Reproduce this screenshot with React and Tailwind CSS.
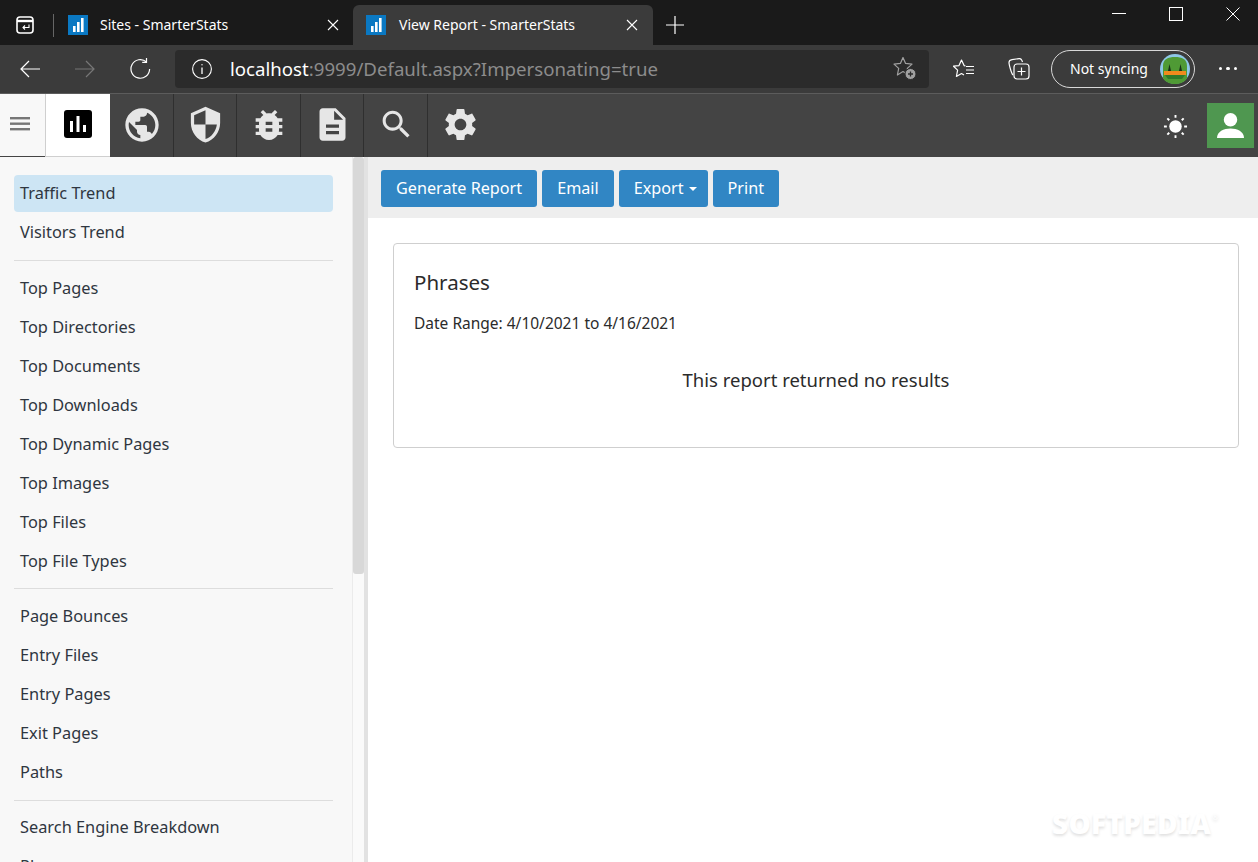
import React from "react";

function BarLogo({ className }) {
  return (
    <svg viewBox="0 0 20 20" className={className}>
      <rect width="20" height="20" fill="#0a78c2" />
      <rect x="5" y="11" width="2.6" height="6" fill="#fff" />
      <rect x="9" y="7" width="2.6" height="10" fill="#fff" />
      <rect x="13" y="3" width="2.6" height="14" fill="#fff" />
    </svg>
  );
}

function Tab({ active, title }) {
  return (
    <div className={active
      ? "flex items-center w-[300px] h-[40px] bg-[#3b3b3b] rounded-t-[6px] pl-[13px] pr-[15px]"
      : "flex items-center w-[299px] h-[40px] pl-[14px] pr-[14px]"}>
      <BarLogo className="w-[20px] h-[20px] shrink-0" />
      <span className={(active ? "ml-[13px] " : "ml-[12px] ") + "mb-[2px] flex-1 text-[14px] text-white"}>{title}</span>
      <svg viewBox="0 0 12 12" className="w-[12px] h-[12px]" stroke="#fff" strokeWidth="1.1">
        <path d="M1 1l10 10M11 1L1 11" />
      </svg>
    </div>
  );
}

function NavCell({ children }) {
  return <div className="w-[63.6px] h-full border-r border-[#2f2f2f] pl-[1px] pb-[2px] flex items-center justify-center">{children}</div>;
}

const G = "#e6e6e6";

const groups = [
  ["Traffic Trend", "Visitors Trend"],
  ["Top Pages", "Top Directories", "Top Documents", "Top Downloads", "Top Dynamic Pages", "Top Images", "Top Files", "Top File Types"],
  ["Page Bounces", "Entry Files", "Entry Pages", "Exit Pages", "Paths"],
  ["Search Engine Breakdown", "Phrases"],
];

export default function App() {
  return (
    <div className="relative w-[1258px] h-[862px] overflow-hidden flex flex-col bg-white font-['Noto_Sans','Open_Sans',sans-serif]">
      {/* Title bar */}
      <div className="h-[45px] bg-[#1a1a1a] flex items-end shrink-0 relative">
        <div className="w-[54px] h-[40px] flex items-center justify-center relative pr-[4px] pb-[1px]">
          <svg viewBox="0 0 18 18" className="w-[18px] h-[18px]" fill="none" stroke="#fff" strokeWidth="1.6">
            <rect x="1" y="1" width="16" height="16" rx="3" />
            <path d="M1 5h16" strokeWidth="2.4" />
            <path d="M13 8.500v3H7M9 9.500l-2 2 2 2" strokeWidth="1.1" />
          </svg>
          <div className="absolute right-0 top-[9px] h-[23px] w-px bg-[#666]" />
        </div>
        <Tab title="Sites - SmarterStats" />
        <Tab active title="View Report - SmarterStats" />
        <div className="w-[44px] h-[40px] flex items-center justify-center pb-[1px]">
          <svg viewBox="0 0 18 18" className="w-[18px] h-[18px]" stroke="#fff" strokeWidth="1.2"><path d="M9 0v18M0 9h18" /></svg>
        </div>
        <div className="absolute right-[18px] top-0 flex items-center h-[27px] gap-[43px]">
          <div className="w-[14px] h-px bg-white" />
          <div className="w-[14px] h-[14px] border border-white" />
          <svg viewBox="0 0 14 14" className="w-[14px] h-[14px]" stroke="#fff" strokeWidth="1"><path d="M0.500 0.500l13 13M13.500 0.500l-13 13" /></svg>
        </div>
      </div>

      {/* Browser toolbar */}
      <div className="h-[49px] bg-[#3b3b3b] border-b border-[#5c5c5c] flex items-center shrink-0 pb-[1px]">
        <div className="w-[175px] flex items-center pl-[20px] gap-[35px]">
          <svg viewBox="0 0 20 18" className="w-[20px] h-[18px]" fill="none" stroke="#fff" strokeWidth="1.2"><path d="M20 9H1M9 1L1 9l8 8" /></svg>
          <svg viewBox="0 0 20 18" className="w-[20px] h-[18px]" fill="none" stroke="#777" strokeWidth="1.2"><path d="M0 9h19M11 1l8 8-8 8" /></svg>
          <svg viewBox="0 0 21 21" className="w-[21px] h-[21px]" fill="none" stroke="#fff" strokeWidth="1.2">
            <path d="M16.500 4A9.300 9.300 0 1 0 19.600 11" />
            <path d="M16.500 0v4.300h-4.300" />
          </svg>
        </div>
        <div className="w-[754px] h-[38px] bg-[#2b2b2b] rounded-[4px] flex items-center pl-[17px] pr-[12px]">
          <svg viewBox="0 0 20 20" className="w-[20px] h-[20px] shrink-0" fill="none" stroke="#fff" strokeWidth="1.1">
            <circle cx="10" cy="10" r="9.400" />
            <path d="M10 8.500V15" strokeWidth="1.3" />
            <circle cx="10" cy="5.800" r="0.700" fill="#fff" stroke="none" />
          </svg>
          <span className="ml-[18px] flex-1 text-[18.65px] whitespace-nowrap text-[#8c8c8c]"><span className="text-white">localhost</span>:9999/Default.aspx?Impersonating=true</span>
          <svg viewBox="0 0 24 24" className="w-[24px] h-[24px] mt-[1px]" fill="none" stroke="#a0a0a0" strokeWidth="1.2">
            <path d="M10 .5l2.600 5.900 6.400.7-4.700 4.300 1.300 6.600L10 14.600 4.400 18l1.300-6.600L1 7.100l6.400-.7z" strokeLinejoin="round" />
            <circle cx="17.500" cy="17" r="5.500" fill="#a0a0a0" stroke="#2b2b2b" strokeWidth="1" />
            <path d="M17.500 14.500v5M15 17h5" stroke="#2b2b2b" strokeWidth="1.300" />
          </svg>
        </div>
        <div className="w-[46px] flex justify-end">
          <svg viewBox="0 0 22 20" className="w-[22px] h-[20px]" fill="none" stroke="#fff" strokeWidth="1.200">
            <path d="M12.500 7 11.100 6.600 8.500 1 6 6.600l-5.500.6 4.100 3.900-1.200 6.400 5.100-3 2.500 1.500" strokeLinejoin="round" />
            <path d="M13 7.500h8M13 11h8M13 14.500h8" />
          </svg>
        </div>
        <div className="w-[55px] flex justify-end">
          <svg viewBox="0 0 22 22" className="w-[22px] h-[22px]" fill="none" stroke="#fff" strokeWidth="1.2">
            <path d="M5 17C3.200 15.500 1 6 1 4.500S2.500 1.800 4 1.600l7-1c1.500-.2 2.500.6 3 2l.5 1.400" />
            <rect x="6" y="6" width="15" height="15" rx="3" />
            <path d="M13.500 9.500v8M9.500 13.500h8" />
          </svg>
        </div>
        <div className="ml-[21px] w-[144px] h-[38px] rounded-full border-[1.5px] border-[#d8d8d8] flex items-center pl-[18px] pr-[4px] justify-between">
          <span className="text-[14px] text-white whitespace-nowrap">Not syncing</span>
          <svg viewBox="0 0 30 30" className="w-[30px] h-[30px]">
            <circle cx="15" cy="15" r="15" fill="#8ec7e6" />
            <path d="M3 24V12C3 5 8 3 15 3s12 2 12 9v12c-2 4-7 6-12 6S5 28 3 24z" fill="#4f9a35" />
            <path d="M4 17h22v4H4z" fill="#f08a1d" />
            <path d="M5 21h20l-3 4H8z" fill="#2e7a2a" />
            <path d="M8 17l1.500-7 1.500 7zM19 17l1.500-7 1.500 7z" fill="#183018" />
          </svg>
        </div>
        <div className="flex-1 flex justify-center gap-[4px] pl-[3px]">
          <div className="w-[3.500px] h-[3.500px] rounded-full bg-white" />
          <div className="w-[3.500px] h-[3.500px] rounded-full bg-white" />
          <div className="w-[3.500px] h-[3.500px] rounded-full bg-white" />
        </div>
      </div>

      {/* App nav */}
      <div className="h-[63px] bg-[#444444] flex shrink-0">
        <div className="w-[45px] h-full bg-[#f8f8f8] border-b border-[#444] pr-[5px] pb-[2px] flex items-center justify-center">
          <svg viewBox="0 0 20 14" className="w-[20px] h-[14px]" fill="#777"><rect y="0" width="20" height="2.400" /><rect y="5.500" width="20" height="2.400" /><rect y="11" width="20" height="2.400" /></svg>
        </div>
        <div className="w-[65px] h-full bg-white border-l border-b border-[#cfcfcf] pb-[3px] flex items-center justify-center">
          <svg viewBox="0 0 28 28" className="w-[28px] h-[28px]">
            <rect width="28" height="28" rx="3" fill="#000" />
            <rect x="6" y="11" width="3" height="11" fill="#fff" />
            <rect x="12.500" y="6" width="3" height="16" fill="#fff" />
            <rect x="19" y="15" width="3" height="7" fill="#fff" />
          </svg>
        </div>
        <NavCell>
          <svg viewBox="0 0 24 24" className="w-[40px] h-[40px]" fill={G}>
            <path d="M12 2C6.480 2 2 6.480 2 12s4.480 10 10 10 10-4.480 10-10S17.520 2 12 2zm-1 17.930c-3.950-.490-7-3.850-7-7.930 0-.620.080-1.210.210-1.790L9 15v1c0 1.100.900 2 2 2v1.930zm6.900-2.540c-.260-.810-1-1.390-1.900-1.390h-1v-3c0-.550-.450-1-1-1H8v-2h2c.550 0 1-.450 1-1V7h2c1.100 0 2-.900 2-2v-.410c2.930 1.190 5 4.060 5 7.410 0 2.080-.800 3.970-2.100 5.390z" />
          </svg>
        </NavCell>
        <NavCell>
          <svg viewBox="0 0 24 24" className="w-[39px] h-[39px]" fill={G}>
            <path d="M12 1L3 5v6c0 5.550 3.840 10.740 9 12 5.160-1.260 9-6.450 9-12V5l-9-4zm0 10.990h7c-.530 4.120-3.280 7.790-7 8.940V12H5V6.300l7-3.110v8.800z" />
          </svg>
        </NavCell>
        <NavCell>
          <svg viewBox="0 0 24 24" className="w-[40px] h-[40px]" fill={G}>
            <path d="M14 12H10V10H14M14 16H10V14H14M20 8H17.190C16.740 7.220 16.120 6.550 15.370 6.040L17 4.410L15.590 3L13.420 5.170C12.960 5.060 12.500 5 12 5C11.500 5 11.040 5.060 10.590 5.170L8.410 3L7 4.410L8.620 6.040C7.880 6.550 7.260 7.220 6.810 8H4V10H6.090C6.040 10.330 6 10.660 6 11V12H4V14H6V15C6 15.340 6.040 15.670 6.090 16H4V18H6.810C7.850 19.790 9.780 21 12 21C14.220 21 16.150 19.790 17.190 18H20V16H17.910C17.960 15.670 18 15.340 18 15V14H20V12H18V11C18 10.660 17.960 10.330 17.910 10H20V8Z" />
          </svg>
        </NavCell>
        <NavCell>
          <svg viewBox="0 0 24 24" className="w-[39px] h-[39px]" fill={G}>
            <path d="M14 2H6c-1.100 0-1.990.900-1.990 2L4 20c0 1.100.890 2 1.990 2H18c1.100 0 2-.900 2-2V8l-6-6zm2 16H8v-2h8v2zm0-4H8v-2h8v2zm-3-5V3.500L18.500 9H13z" />
          </svg>
        </NavCell>
        <NavCell>
          <svg viewBox="0 0 24 24" className="w-[37px] h-[37px]" fill={G}>
            <path d="M15.500 14h-.790l-.280-.270C15.410 12.590 16 11.110 16 9.500 16 5.910 13.090 3 9.500 3S3 5.910 3 9.500 5.910 16 9.500 16c1.610 0 3.090-.590 4.230-1.570l.270.280v.790l5 4.990L20.490 19l-4.990-5zm-6 0C7.010 14 5 11.990 5 9.500S7.010 5 9.500 5 14 7.010 14 9.500 11.990 14 9.500 14z" />
          </svg>
        </NavCell>
        <div className="w-[63.6px] h-full pl-[1px] pb-[2px] flex items-center justify-center">
          <svg viewBox="0 0 24 24" className="w-[39px] h-[39px]" fill={G}>
            <path d="M19.140 12.940c.040-.300.060-.610.060-.940 0-.320-.020-.640-.070-.940l2.030-1.580c.180-.140.230-.410.120-.610l-1.920-3.320c-.120-.220-.370-.290-.590-.220l-2.390.960c-.500-.380-1.030-.700-1.620-.940l-.360-2.540c-.040-.240-.240-.410-.480-.410h-3.840c-.240 0-.430.170-.470.410l-.360 2.540c-.590.240-1.130.570-1.620.940l-2.390-.960c-.220-.080-.470 0-.590.220L2.740 8.870c-.120.210-.080.470.120.610l2.030 1.580c-.050.300-.090.630-.090.940s.020.640.07.940l-2.030 1.580c-.180.140-.230.410-.120.610l1.920 3.320c.120.220.370.290.590.220l2.390-.960c.500.380 1.030.700 1.620.940l.360 2.540c.050.240.240.410.480.410h3.840c.240 0 .440-.170.470-.410l.360-2.540c.590-.240 1.130-.560 1.620-.940l2.390.960c.220.080.470 0 .590-.220l1.920-3.320c.120-.220.070-.470-.120-.610l-2.010-1.580zM12 15.600c-1.980 0-3.600-1.620-3.600-3.600s1.620-3.600 3.600-3.600 3.600 1.620 3.600 3.600-1.620 3.600-3.600 3.600z" />
          </svg>
        </div>
        <div className="flex-1 flex items-center justify-end">
          <div className="mr-[19px] mt-[2px]">
            <svg viewBox="0 0 26 26" className="w-[25px] h-[25px]" fill="#fff" stroke="#fff" strokeWidth="2">
              <circle cx="13" cy="13" r="6.500" stroke="none" />
              <path d="M13 1v3M13 22v3M1 13h3M22 13h3M4.500 4.500l2 2M19.500 19.500l2 2M21.500 4.500l-2 2M6.500 19.500l-2 2" />
            </svg>
          </div>
          <div className="w-[47px] h-[45px] bg-[#4f9750] mr-[4px] flex items-center justify-center">
            <svg viewBox="0 0 28 28" className="w-[27px] h-[27px]" fill="#fff">
              <circle cx="14" cy="8" r="7" />
              <path d="M0 27c0-7 7-10 14-10s14 3 14 10z" />
            </svg>
          </div>
        </div>
      </div>

      {/* Body */}
      <div className="flex-1 flex min-h-0">
        <div className="w-[368px] shrink-0 bg-[#f8f8f8] flex overflow-hidden">
          <nav className="w-[352px] shrink-0 pl-[14px] pr-[19px] pt-[18px] text-[16.35px] text-[#2f3640]">
            {groups.map((items, i) => (
              <div key={i} className={i < 3 ? "border-b border-[#dddddd] pb-[7px] mb-[8.33px]" : ""}>
                {items.map((t, j) => (
                  <div key={t} className={(i === 0 && j === 0 ? "bg-[#cde5f4] " : "") + "h-[37px] mb-[2px] px-[6px] rounded-[4px] flex items-center whitespace-nowrap"}>{t}</div>
                ))}
              </div>
            ))}
          </nav>
          <div className="w-[12px] shrink-0 bg-[#fafafa] border-l border-[#ebebeb]">
            <div className="h-[417px] bg-[#d8d8d8] rounded-[3px]" />
          </div>
          <div className="w-[4px] shrink-0 bg-[#e2e2e2]" />
        </div>
        <main className="flex-1 min-w-0 flex flex-col">
          <div className="h-[61px] bg-[#eeeeee] flex items-start pt-[13px] pl-[13px] gap-[5px] shrink-0">
            {["Generate Report", "Email", "Export", "Print"].map((t) => (
              <div key={t} className={(t === "Export" ? "pl-[15px] pr-[11px] " : "px-[15px] ") + "h-[37px] bg-[#3186c4] rounded-[3px] text-white text-[16.2px] flex items-center whitespace-nowrap"}>
                {t}
                {t === "Export" && <span className="ml-[5px] mt-[1px] border-x-[4px] border-x-transparent border-t-[4px] border-t-white" />}
              </div>
            ))}
          </div>
          <div className="ml-[25px] mt-[25px] w-[846px] h-[205px] border border-[#cfcfcf] rounded-[4px] px-[20px] pt-[22px] text-[#2b2b2b]">
            <div className="text-[20.500px] leading-[32px]">Phrases</div>
            <div className="mt-[15px] text-[15.500px] leading-[20px]">Date Range: 4/10/2021 to 4/16/2021</div>
            <div className="mt-[33px] text-center text-[18.500px] leading-[28px] -mx-[1px]">This report returned no results</div>
          </div>
        </main>
      </div>
      <div className="absolute left-[1052px] top-[802px] text-[28px] font-black tracking-[0.3px] text-white [text-shadow:0_2px_3px_rgba(0,0,0,0.12)] pointer-events-none">SOFTPEDIA<sup className="text-[8px] font-normal align-super ml-[1px]">®</sup></div>
    </div>
  );
}
